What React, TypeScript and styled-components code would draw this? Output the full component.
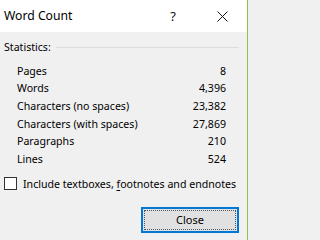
import React from 'react';
import styled, {createGlobalStyle} from 'styled-components';

const GlobalStyle = createGlobalStyle`
    html, body {
        margin: 0;
        padding: 0;
        background: #f0f0f0;
    }
`;

interface Stat {
    label: string;
    value: string;
}

const stats: Stat[] = [
    {label: 'Pages', value: '8'},
    {label: 'Words', value: '4,396'},
    {label: 'Characters (no spaces)', value: '23,382'},
    {label: 'Characters (with spaces)', value: '27,869'},
    {label: 'Paragraphs', value: '210'},
    {label: 'Lines', value: '524'},
];

export default function App() {
    return (
        <>
            <GlobalStyle/>
            <Window>
                <TitleBar>
                    <Title>{'Word Count'}</Title>
                    <CaptionButton $width={48}>{'?'}</CaptionButton>
                    <CaptionButton $width={50}>
                        <svg
                            width='11'
                            height='11'
                            viewBox='0 0 11 11'
                        >
                            <path
                                d='M0.5 0.5L10.5 10.5M10.5 0.5L0.5 10.5'
                                stroke='#111'
                                strokeWidth='1'
                            />
                        </svg>
                    </CaptionButton>
                </TitleBar>
                <Body>
                    <GroupHeader>
                        <span>{'Statistics:'}</span>
                        <Rule/>
                    </GroupHeader>
                    <StatList>
                        {stats.map((s) => (
                            <StatRow key={s.label}>
                                <span>{s.label}</span>
                                <span>{s.value}</span>
                            </StatRow>
                        ))}
                    </StatList>
                    <CheckRow>
                        <CheckBox/>
                        <span>{'Include textboxes, '}<u>{'f'}</u>{'ootnotes and endnotes'}</span>
                    </CheckRow>
                    <ButtonRow>
                        <CloseButton>
                            <FocusRect>{'Close'}</FocusRect>
                        </CloseButton>
                    </ButtonRow>
                </Body>
            </Window>
        </>
    );
}

const Window = styled.div`
    width: 247px;
    height: 240px;
    border-right: 1px solid #8fbf4f;
    display: flex;
    flex-direction: column;
    font-family: 'Noto Sans', 'Open Sans', sans-serif;
    color: #000;
    overflow: hidden;
`;

const TitleBar = styled.div`
    height: 32px;
    background: #fff;
    display: flex;
    align-items: center;
    padding-left: 4px;
    flex-shrink: 0;
`;

const Title = styled.div`
    flex: 1;
    font-size: 12.2px;
    line-height: 16px;
`;

const CaptionButton = styled.div<{$width: number}>`
    width: ${(p) => p.$width}px;
    height: 32px;
    display: flex;
    align-items: center;
    justify-content: center;
    font-size: 13px;
    color: #111;
`;

const Body = styled.div`
    flex: 1;
    background: #f0f0f0;
    padding: 7px 8px 0 4px;
    display: flex;
    flex-direction: column;
    font-size: 10.6px;
    white-space: nowrap;
`;

const GroupHeader = styled.div`
    height: 16px;
    display: flex;
    align-items: center;
    gap: 5px;
`;

const Rule = styled.div`
    flex: 1;
    height: 1px;
    background: #dcdcdc;
`;

const StatList = styled.div`
    margin-top: 7px;
    padding: 0 13px;
    display: flex;
    flex-direction: column;
`;

const StatRow = styled.div`
    height: 17.6px;
    display: flex;
    align-items: center;
    justify-content: space-between;
`;

const CheckRow = styled.div`
    margin-top: 8px;
    height: 16px;
    display: flex;
    align-items: center;
    gap: 6px;

    u {
        text-underline-offset: 2px;
    }
`;

const CheckBox = styled.div`
    width: 11px;
    height: 11px;
    border: 1px solid #333;
    background: #fff;
    flex-shrink: 0;
`;

const ButtonRow = styled.div`
    margin-top: 15px;
    display: flex;
    justify-content: flex-end;
`;

const CloseButton = styled.div`
    width: 92px;
    height: 20px;
    border: 2px solid #0078d7;
    background: #e1e1e1;
    padding: 1px;
    display: flex;
`;

const FocusRect = styled.div`
    flex: 1;
    border: 1px dotted #555;
    display: flex;
    align-items: center;
    justify-content: center;
    font-size: 11px;
`;
